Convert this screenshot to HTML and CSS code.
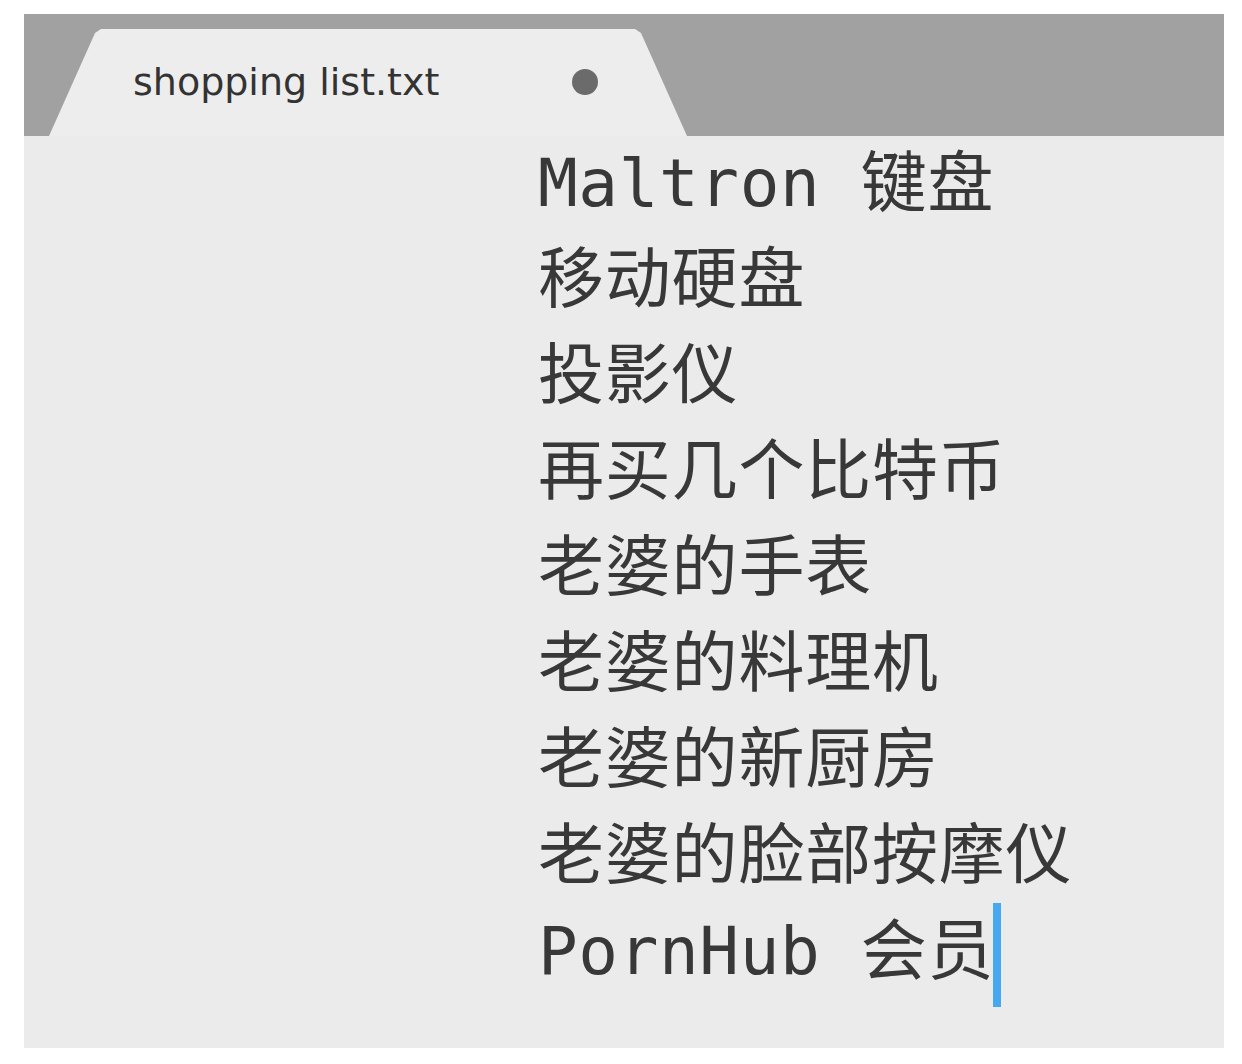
FILE: index.html
```html
<!DOCTYPE html>
<html lang="zh-CN">
<head>
<meta charset="utf-8">
<title>shopping list.txt</title>
<link rel="stylesheet" href="styles.css">
</head>
<body>
<div class="window">
  <div class="tabbar">
    <div class="tab">
      <span class="tab-title">shopping list.txt</span>
      <span class="dirty-dot"></span>
    </div>
  </div>
  <div class="editor">
    <div class="lines">
      <div class="line"><span class="latin">Maltron </span>键盘</div>
      <div class="line">移动硬盘</div>
      <div class="line">投影仪</div>
      <div class="line">再买几个比特币</div>
      <div class="line">老婆的手表</div>
      <div class="line">老婆的料理机</div>
      <div class="line">老婆的新厨房</div>
      <div class="line">老婆的脸部按摩仪</div>
      <div class="line"><span class="latin">PornHub </span>会员<span class="caret"></span></div>
    </div>
  </div>
</div>
</body>
</html>
```
FILE: styles.css
```css
html, body {
  margin: 0;
  padding: 0;
  background: #ffffff;
}

body {
  padding: 14px 0 0 24px;
}

.window {
  width: 1200px;
  height: 1034px;
  display: flex;
  flex-direction: column;
  background: #ebebeb;
}

.tabbar {
  height: 122px;
  flex: none;
  background: #a1a1a1;
  display: flex;
  align-items: flex-end;
}

.tab {
  margin-left: 25px;
  width: 638px;
  height: 107px;
  box-sizing: border-box;
  background: #ededed;
  clip-path: polygon(0 100%, 46px 4px, 52px 0, 586px 0, 592px 4px, 100% 100%);
  display: flex;
  align-items: flex-start;
  padding: 34px 0 0 84px;
}

.tab-title {
  font-family: "DejaVu Sans", "Noto Sans", sans-serif;
  font-size: 38px;
  line-height: 38px;
  color: #333333;
}

.dirty-dot {
  width: 26px;
  height: 26px;
  border-radius: 50%;
  background: #6b6b6b;
  margin: 6px 0 0 133px;
}

.editor {
  flex: 1;
  padding-left: 514px;
}

.lines {
  font-family: "DejaVu Sans Mono", "Noto Sans CJK SC", monospace;
  font-size: 66px;
  line-height: 96px;
  color: #383838;
}

.line {
  white-space: pre;
  height: 96px;
  letter-spacing: 0.8px;
}

.latin {
  letter-spacing: 0.6px;
}

.caret {
  display: inline-block;
  width: 8px;
  height: 104px;
  margin: -1px 0 -7px -1px;
  vertical-align: top;
  background: #45a8f0;
}
```
